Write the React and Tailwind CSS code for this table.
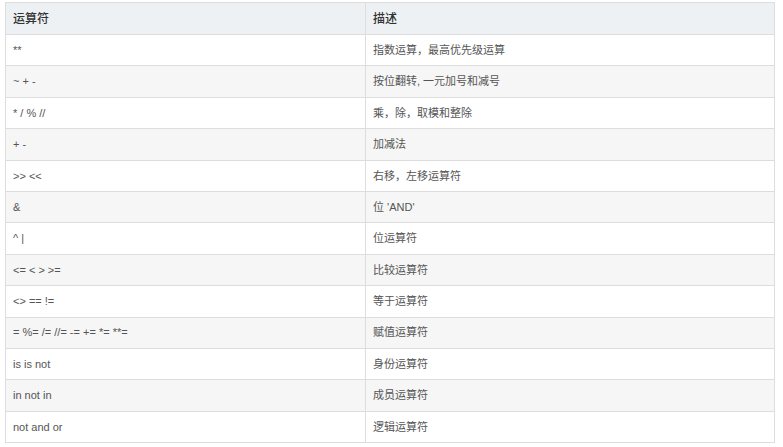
import React from "react";

const rows = [
  ["**", "指数运算，最高优先级运算"],
  ["~ + -", "按位翻转, 一元加号和减号"],
  ["* / % //", "乘，除，取模和整除"],
  ["+ -", "加减法"],
  [">> <<", "右移，左移运算符"],
  ["&", "位 'AND'"],
  ["^ |", "位运算符"],
  ["<= < > >=", "比较运算符"],
  ["<> == !=", "等于运算符"],
  ["= %= /= //= -= += *= **=", "赋值运算符"],
  ["is is not", "身份运算符"],
  ["in not in", "成员运算符"],
  ["not and or", "逻辑运算符"],
];

export default function App() {
  return (
    <div className="w-[783px] h-[447px] bg-white pl-[5px] pt-[2px] font-['Liberation_Sans','Noto_Sans_CJK_SC',sans-serif]">
      <table className="w-[770px] border-collapse table-fixed text-[12px]">
        <thead>
          <tr className="h-[32px] bg-[#eef1f4]">
            <th className="w-[360px] border border-[#dddddd] px-[7px] text-left font-medium text-[#333333]">运算符</th>
            <th className="border border-[#dddddd] px-[7px] text-left font-medium text-[#333333]">描述</th>
          </tr>
        </thead>
        <tbody>
          {rows.map(([op, desc], i) => (
            <tr key={i} className={`h-[31.4px] ${i % 2 === 1 ? "bg-[#f6f6f6]" : "bg-white"}`}>
              <td className="border border-[#dddddd] px-[7px] text-[#555555] text-[11px]">{op}</td>
              <td className="border border-[#dddddd] px-[7px] text-[#555555] text-[11px]">{desc}</td>
            </tr>
          ))}
        </tbody>
      </table>
    </div>
  );
}
